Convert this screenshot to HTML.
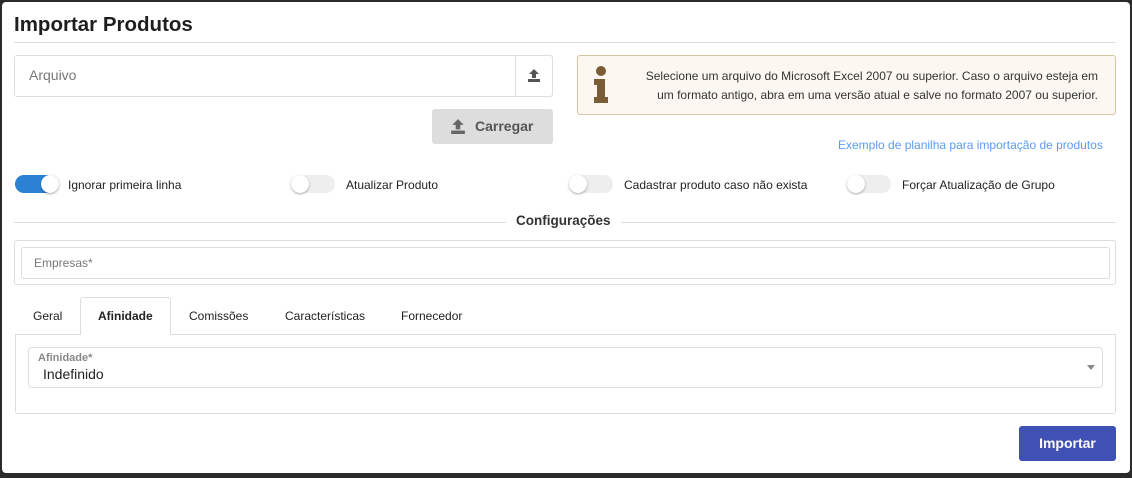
<!DOCTYPE html>
<html><head><meta charset="utf-8"><style>
*{box-sizing:border-box;margin:0;padding:0}
body{width:1132px;height:478px;background:#2b2b2b;font-family:"Liberation Sans",sans-serif;position:relative;overflow:hidden;color:#222}
.m{position:absolute;left:2px;top:2px;width:1128px;height:471px;background:#fff;border-radius:4px}
.a{position:absolute;white-space:nowrap}
.t{font-size:12px}
.sw{position:absolute;width:44px;height:18px;border-radius:9px;background:#eee}
.sw i{position:absolute;top:0;width:18px;height:18px;border-radius:50%;background:#fff;box-shadow:0 1px 2px rgba(0,0,0,.35)}
</style></head><body>
<div class="m"></div>
<div class="a" style="left:14px;top:13px;font-size:20.5px;font-weight:bold;color:#1e1e1e">Importar Produtos</div>
<div class="a" style="left:14px;top:42px;width:1102px;height:1px;background:#ddd"></div>
<div class="a" style="left:14px;top:55px;width:539px;height:42px;border:1px solid #ddd;border-radius:3px"></div>
<div class="a" style="left:515px;top:56px;width:1px;height:40px;background:#ddd"></div>
<div class="a" style="left:29px;top:67px;font-size:14px;color:#777">Arquivo</div>
<svg class="a" style="left:527px;top:68px" width="14" height="14" viewBox="0 0 14 14"><path d="M7 1L2 6h3v4h4V6h3z" fill="#555"/><rect x="1" y="11" width="12" height="3" fill="#555"/></svg>
<div class="a" style="left:432px;top:109px;width:121px;height:35px;background:#ddd;border-radius:3px"></div>
<svg class="a" style="left:450px;top:118px" width="16" height="16" viewBox="0 0 14 14"><path d="M7 1L2 6h3v4h4V6h3z" fill="#666"/><rect x="1" y="11" width="12" height="3" fill="#666"/></svg>
<div class="a" style="left:475px;top:118px;font-size:14px;font-weight:bold;color:#555">Carregar</div>
<div class="a" style="left:577px;top:55px;width:539px;height:60px;background:#fcf8f1;border:1px solid #d8c3a0;border-radius:3px"></div>
<svg class="a" style="left:592px;top:66px" width="18" height="38" viewBox="0 0 18 38"><circle cx="9" cy="5" r="5" fill="#7a5d35"/><path d="M2 13h11v18h3v6H2v-6h3V19H2z" fill="#7a5d35"/></svg>
<div class="a" style="left:620px;top:67px;width:478px;text-align:right;line-height:19px;font-size:12px;color:#333;white-space:normal">Selecione um arquivo do Microsoft Excel 2007 ou superior. Caso o arquivo esteja em<br>um formato antigo, abra em uma versão atual e salve no formato 2007 ou superior.</div>
<div class="a" style="left:838px;top:138px;font-size:12px;color:#5b9cef">Exemplo de planilha para importação de produtos</div>
<div class="sw" style="left:15px;top:175px;background:#2b82d3"><i style="left:26px"></i></div>
<div class="a t" style="left:68px;top:178px">Ignorar primeira linha</div>
<div class="sw" style="left:291px;top:175px"><i style="left:0"></i></div>
<div class="a t" style="left:346px;top:178px">Atualizar Produto</div>
<div class="sw" style="left:569px;top:175px"><i style="left:0"></i></div>
<div class="a t" style="left:624px;top:178px">Cadastrar produto caso não exista</div>
<div class="sw" style="left:847px;top:175px"><i style="left:0"></i></div>
<div class="a t" style="left:902px;top:178px">Forçar Atualização de Grupo</div>
<div class="a" style="left:14px;top:222px;width:1102px;height:1px;background:#ddd"></div>
<div class="a" style="left:506px;top:213px;padding:0 10px;background:#fff;font-size:13.5px;font-weight:bold;color:#333">Configurações</div>
<div class="a" style="left:14px;top:240px;width:1102px;height:45px;border:1px solid #ddd;border-radius:3px"></div>
<div class="a" style="left:21px;top:247px;width:1089px;height:32px;border:1px solid #ddd;border-radius:3px"></div>
<div class="a" style="left:34px;top:256px;font-size:12px;color:#777">Empresas*</div>
<div class="a" style="left:15px;top:334px;width:1101px;height:80px;border:1px solid #ddd;border-radius:0 0 3px 3px"></div>
<div class="a" style="left:80px;top:297px;width:91px;height:38px;background:#fff;border:1px solid #ddd;border-bottom:none;border-radius:3px 3px 0 0"></div>
<div class="a t" style="left:33px;top:309px">Geral</div>
<div class="a t" style="left:98px;top:309px;font-weight:bold">Afinidade</div>
<div class="a t" style="left:189px;top:309px">Comissões</div>
<div class="a t" style="left:285px;top:309px">Características</div>
<div class="a t" style="left:401px;top:309px">Fornecedor</div>
<div class="a" style="left:28px;top:347px;width:1075px;height:41px;border:1px solid #ddd;border-radius:4px"></div>
<div class="a" style="left:38px;top:352px;font-size:11px;font-weight:bold;color:#888">Afinidade*</div>
<div class="a" style="left:43px;top:366px;font-size:14px;color:#222">Indefinido</div>
<div class="a" style="left:1087px;top:365px;width:0;height:0;border-left:4px solid transparent;border-right:4px solid transparent;border-top:5px solid #888"></div>
<div class="a" style="left:1019px;top:426px;width:97px;height:35px;background:#3f51b5;border-radius:3px;color:#fff;font-size:14px;font-weight:bold;text-align:center;line-height:35px">Importar</div>
</body></html>
